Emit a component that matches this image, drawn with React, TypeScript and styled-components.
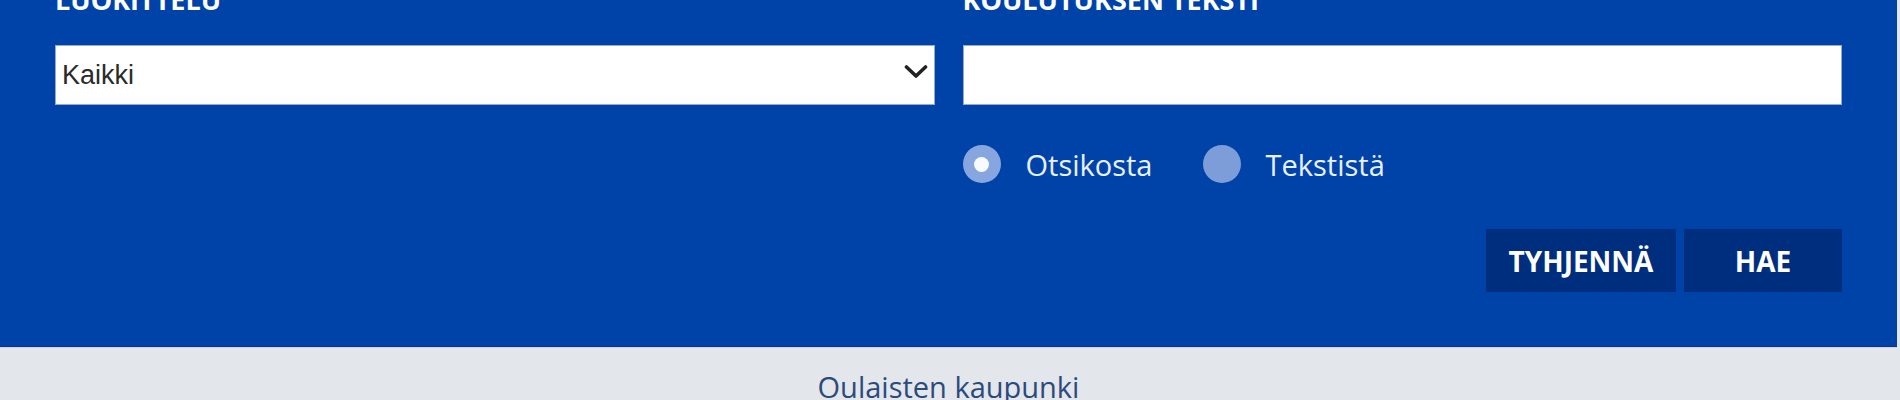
import React, { useState } from "react";
import styled, { createGlobalStyle } from "styled-components";

const Global = createGlobalStyle`
  html, body { margin: 0; padding: 0; }
  body {
    background: #e3e6eb;
    font-family: "Open Sans", "Noto Sans", sans-serif;
    overflow: hidden;
  }
`;

const Panel = styled.section`
  background: #0043a8;
  margin: -14px 3px 0 0;
  padding: 0 55px 54px;
  border-bottom: 1px solid #16336e;
  box-shadow: 0 1px 0 #c6d6ef;
  box-sizing: border-box;
`;

const Grid = styled.div`
  display: grid;
  grid-template-columns: 1fr 1fr;
  column-gap: 28px;
`;

const Column = styled.div`
  display: flex;
  flex-direction: column;
`;

const Label = styled.label`
  display: block;
  color: #ffffff;
  font-weight: 700;
  font-size: 27px;
  line-height: 27px;
  text-transform: uppercase;
  margin-bottom: 32px;
`;

const SelectWrap = styled.div`
  position: relative;
  height: 60px;
`;

const Select = styled.select`
  appearance: none;
  width: 100%;
  height: 60px;
  box-sizing: border-box;
  border: 1px solid #9aa9c6;
  background: #ffffff;
  font-family: "Liberation Sans", Arial, sans-serif;
  font-size: 27px;
  color: #2b2b2b;
  padding: 0 40px 0 6px;
  outline: none;
`;

const Chevron = styled.svg`
  position: absolute;
  right: 7px;
  top: 19px;
  pointer-events: none;
`;

const TextInput = styled.input`
  width: 100%;
  height: 60px;
  box-sizing: border-box;
  border: 1px solid #9aa9c6;
  background: #ffffff;
  font-family: "Liberation Sans", Arial, sans-serif;
  font-size: 27px;
  padding: 0 6px;
  outline: none;
`;

const RadioRow = styled.div`
  display: flex;
  align-items: center;
  margin-top: 40px;
  height: 38px;
`;

const RadioOption = styled.label`
  display: flex;
  align-items: center;
  gap: 25px;
  margin-right: 50px;
  cursor: pointer;
  color: #e9f0ff;
  font-size: 29px;
`;

const RadioDot = styled.span<{ $checked: boolean }>`
  width: 38px;
  height: 38px;
  border-radius: 50%;
  background: ${(p) => (p.$checked ? "#87a6df" : "#7d9dd8")};
  display: flex;
  align-items: center;
  justify-content: center;
  flex: none;
  &::after {
    content: "";
    width: 15px;
    height: 15px;
    border-radius: 50%;
    background: #f7faff;
    display: ${(p) => (p.$checked ? "block" : "none")};
  }
`;

const HiddenRadio = styled.input`
  display: none;
`;

const Actions = styled.div`
  display: flex;
  justify-content: flex-end;
  gap: 8px;
  margin-top: 46px;
`;

const Button = styled.button<{ $wide?: boolean }>`
  height: 63px;
  min-width: ${(p) => (p.$wide ? "190px" : "158px")};
  padding: 0 20px;
  border: none;
  background: #002e7e;
  color: #ffffff;
  font-family: "Open Sans", "Noto Sans", sans-serif;
  font-weight: 700;
  font-size: 28px;
  text-transform: uppercase;
  cursor: pointer;
`;

const Footer = styled.footer`
  margin-right: 3px;
  padding-top: 20px;
  text-align: center;
  color: #2b4b7c;
  font-size: 29px;
`;

export default function App() {
  const [mode, setMode] = useState<"title" | "text">("title");
  return (
    <>
      <Global />
      <Panel>
        <Grid>
          <Column>
            <Label>Luokittelu</Label>
            <SelectWrap>
              <Select defaultValue="all">
                <option value="all">Kaikki</option>
              </Select>
              <Chevron width="24" height="16" viewBox="0 0 24 16">
                <polyline
                  points="2.5,3 12,12 21.5,3"
                  fill="none"
                  stroke="#222"
                  strokeWidth="3.6"
                  strokeLinecap="round"
                  strokeLinejoin="round"
                />
              </Chevron>
            </SelectWrap>
          </Column>
          <Column>
            <Label>Koulutuksen teksti</Label>
            <TextInput type="text" />
            <RadioRow>
              <RadioOption>
                <HiddenRadio
                  type="radio"
                  name="where"
                  checked={mode === "title"}
                  onChange={() => setMode("title")}
                />
                <RadioDot $checked={mode === "title"} />
                Otsikosta
              </RadioOption>
              <RadioOption>
                <HiddenRadio
                  type="radio"
                  name="where"
                  checked={mode === "text"}
                  onChange={() => setMode("text")}
                />
                <RadioDot $checked={mode === "text"} />
                Tekstistä
              </RadioOption>
            </RadioRow>
          </Column>
        </Grid>
        <Actions>
          <Button $wide>Tyhjennä</Button>
          <Button>Hae</Button>
        </Actions>
      </Panel>
      <Footer>Oulaisten kaupunki</Footer>
    </>
  );
}
